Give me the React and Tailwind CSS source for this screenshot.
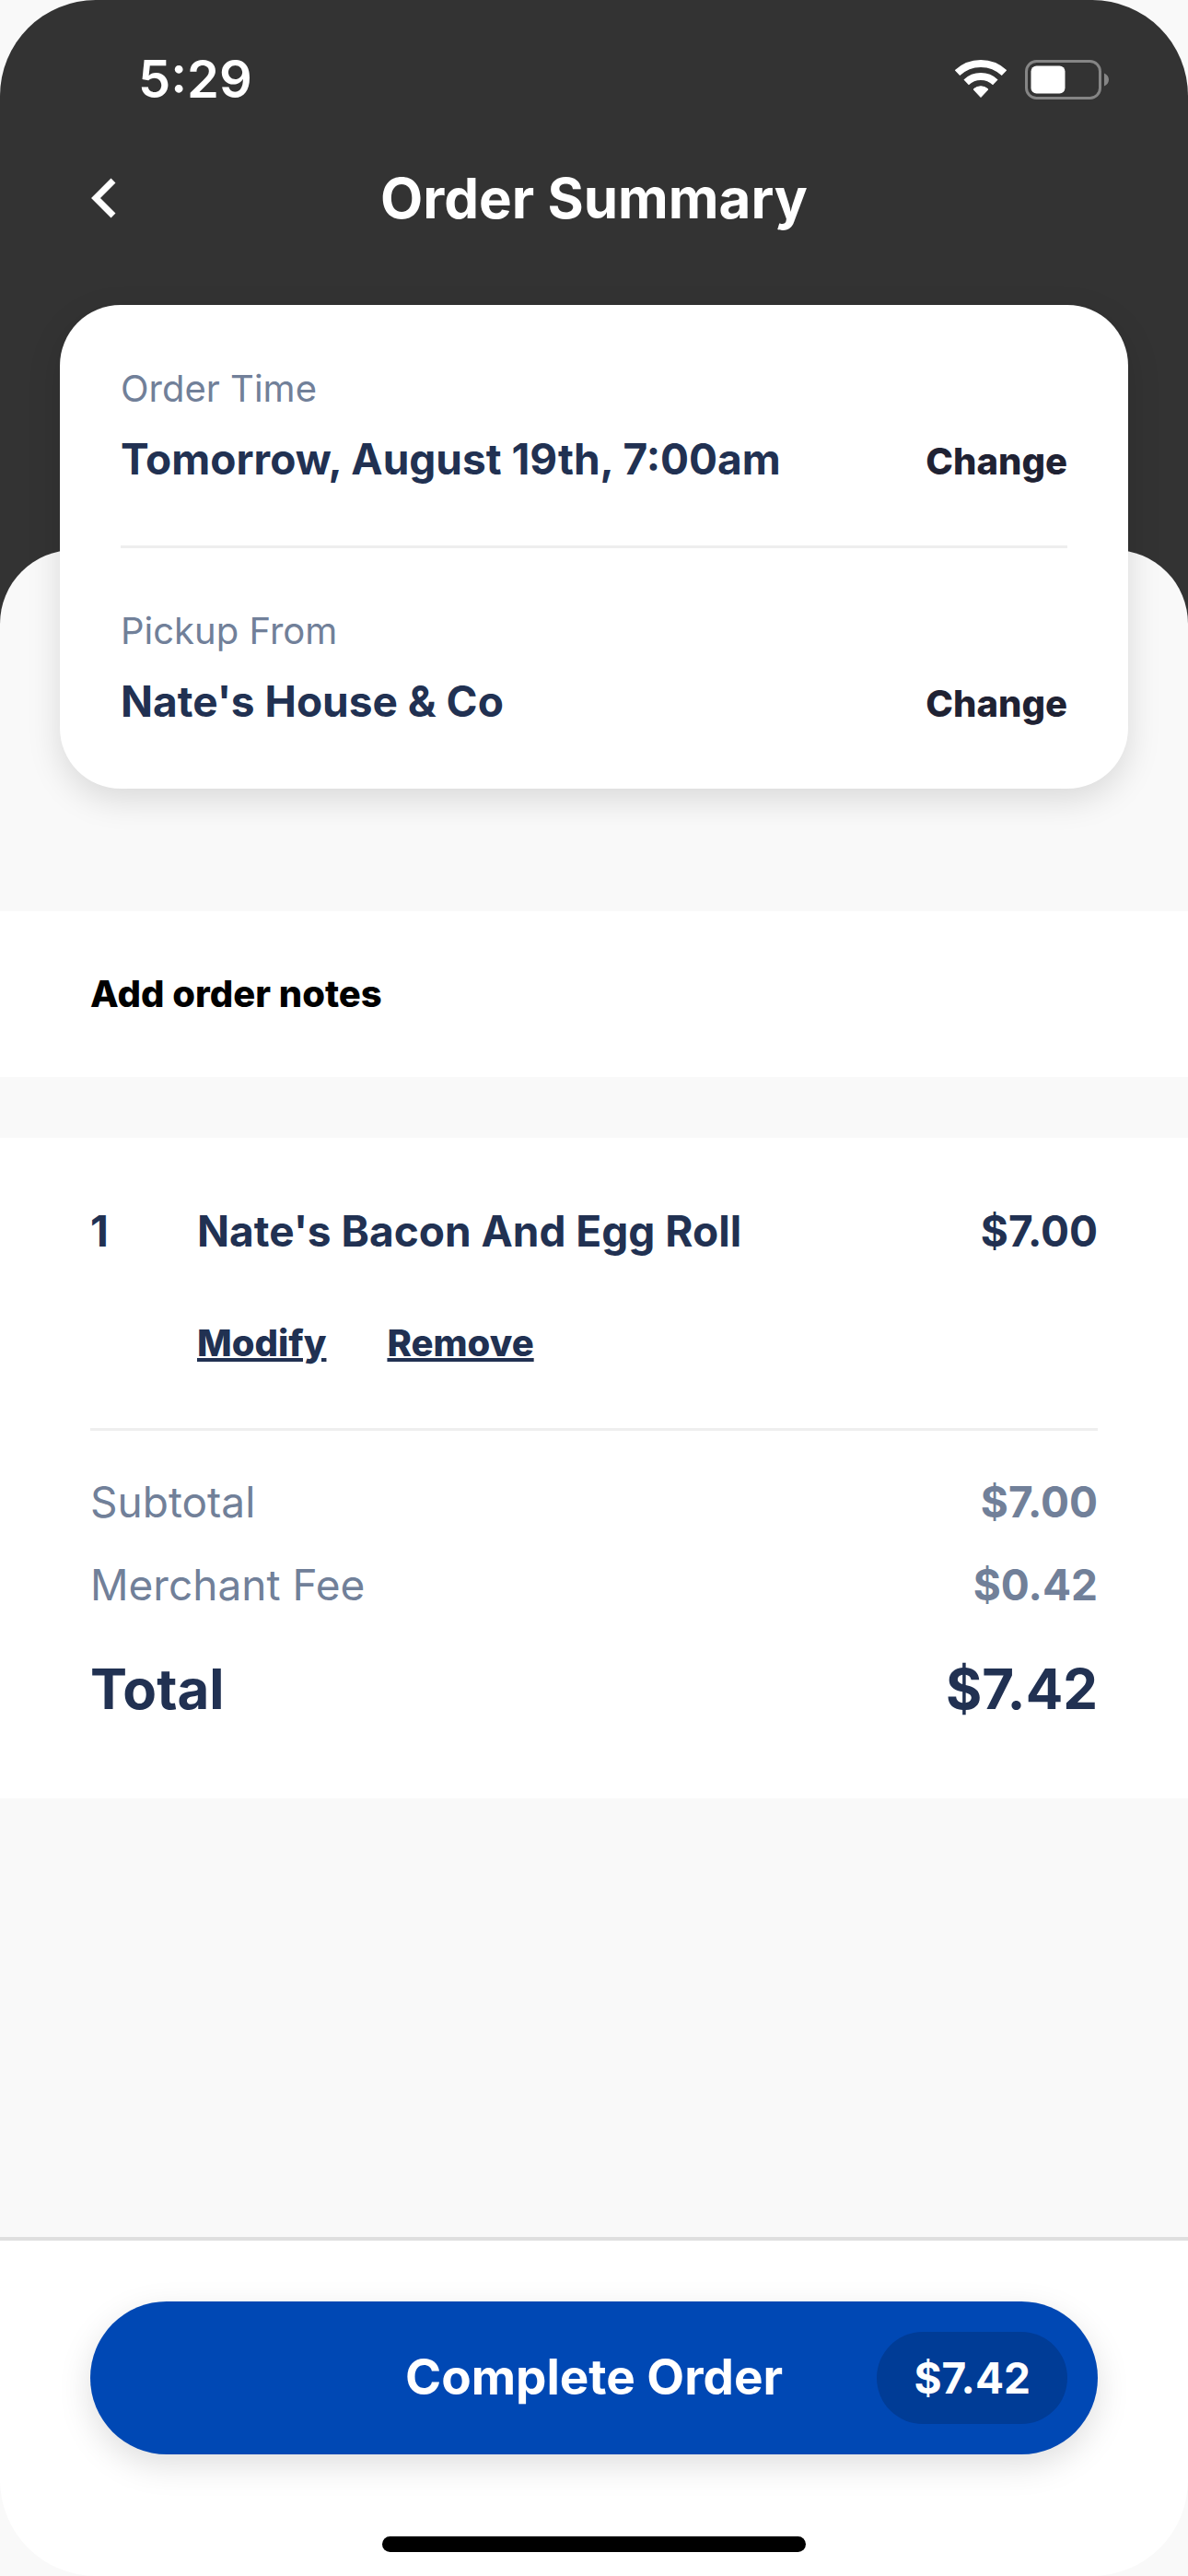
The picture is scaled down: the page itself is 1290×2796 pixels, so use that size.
import { useState } from 'react';

const ORDER = {
    time: 'Tomorrow, August 19th, 7:00am',
    location: "Nate's House & Co",
    items: [{ id: 1, qty: 1, name: "Nate's Bacon And Egg Roll", price: '$7.00' }],
    subtotal: '$7.00',
    fee: '$0.42',
    total: '$7.42',
};

function WifiIcon() {
    return (
        <svg width="56" height="42" viewBox="0 0 56 42" fill="none" stroke="white" aria-hidden="true">
            <path d="M2.500 14.200A37 37 0 0 1 53.500 14.200" strokeWidth="8" />
            <path d="M12.200 24.300A23 23 0 0 1 43.800 24.300" strokeWidth="8" />
            <path d="M28 40.500L20 32a11.500 11.500 0 0 1 16 0z" fill="white" strokeWidth="1" strokeLinejoin="round" />
        </svg>
    );
}

function BatteryIcon() {
    return (
        <svg width="91" height="43" viewBox="0 0 91 43" aria-hidden="true">
            <rect x="1.500" y="1.500" width="80" height="40" rx="11" fill="none" stroke="#858585" strokeWidth="3" />
            <rect x="6.500" y="6.500" width="37" height="30" rx="6" fill="white" />
            <path d="M86 14.500v14c3-1.300 5-4 5-7s-2-5.700-5-7z" fill="#858585" />
        </svg>
    );
}

function DetailRow({ label, value }) {
    return (
        <div>
            <p className="text-[40px] leading-[48px] text-[#718099]">{label}</p>
            <div className="mt-6 flex items-baseline justify-between">
                <p className="text-[46px] leading-[56px] font-bold text-[#213152]">{value}</p>
                <button type="button" className="text-[40px] leading-[48px] font-extrabold text-[#1f2233]">
                    Change
                </button>
            </div>
        </div>
    );
}

export default function App() {
    const [items] = useState(ORDER.items);

    return (
        <div className="bg-[#f9f9f9] font-['Inter',sans-serif]">
            <div className="flex min-h-screen flex-col overflow-hidden rounded-[104px] bg-[#f9f9f9]">
                <header className="h-[700px] bg-[#333333] text-white">
                    <div className="flex h-[172px] items-center justify-between pr-[86px] pl-[150px]">
                        <span className="text-[56px] font-semibold">5:29</span>
                        <div className="flex items-center gap-5">
                            <WifiIcon />
                            <BatteryIcon />
                        </div>
                    </div>
                    <div className="grid h-[86px] grid-cols-[1fr_auto_1fr] items-center px-[98px]">
                        <button type="button" aria-label="Back" className="justify-self-start">
                            <svg width="30" height="46" viewBox="0 0 30 46" fill="none" stroke="white" strokeWidth="7">
                                <path d="M25 4L6 23l19 19" />
                            </svg>
                        </button>
                        <h1 className="text-[60px] leading-[72px] font-bold">Order Summary</h1>
                    </div>
                </header>

                <main className="-mt-[103px] flex-1 rounded-t-[80px] bg-[#f9f9f9]">
                    <section className="relative mx-[65px] -mt-[266px] rounded-[66px] bg-white px-[66px] py-[67px] shadow-[0_12px_36px_rgba(0,0,0,0.13)]">
                        <DetailRow label="Order Time" value={ORDER.time} />
                        <hr className="my-[66px] border-t-3 border-[#eeeeee]" />
                        <DetailRow label="Pickup From" value={ORDER.location} />
                    </section>

                    <section className="mt-[133px] bg-white px-[98px] py-[62px]">
                        <button type="button" className="block text-[40px] leading-[56px] font-extrabold text-black">
                            Add order notes
                        </button>
                    </section>

                    <section className="mt-[66px] bg-white px-[98px] pt-[71px] pb-[83px]">
                        {items.map((item) => (
                            <div key={item.id} className="flex text-[46px] leading-[60px] font-bold text-[#213152]">
                                <span className="w-[116px]">{item.qty}</span>
                                <div className="flex-1">
                                    <p>{item.name}</p>
                                    <div className="mt-16 flex gap-[66px] text-[40px] leading-[56px] font-extrabold">
                                        <button type="button" className="underline">Modify</button>
                                        <button type="button" className="underline">Remove</button>
                                    </div>
                                </div>
                                <span>{item.price}</span>
                            </div>
                        ))}
                        <hr className="mt-16 border-t-3 border-[#eeeeee]" />
                        <dl className="mt-[47px] text-[46px] leading-[60px] text-[#718099]">
                            <div className="flex justify-between">
                                <dt>Subtotal</dt>
                                <dd className="font-bold">{ORDER.subtotal}</dd>
                            </div>
                            <div className="mt-[30px] flex justify-between">
                                <dt>Merchant Fee</dt>
                                <dd className="font-bold">{ORDER.fee}</dd>
                            </div>
                            <div className="mt-[47px] flex justify-between text-[60px] leading-[72px] font-bold text-[#213152]">
                                <dt>Total</dt>
                                <dd>{ORDER.total}</dd>
                            </div>
                        </dl>
                    </section>
                </main>

                <footer className="border-t-4 border-[#dfdfdf] bg-white px-[98px] pt-[66px] pb-[26px]">
                    <button
                        type="button"
                        className="grid h-[166px] w-full grid-cols-[1fr_auto_1fr] items-center rounded-full bg-[#0048b4] px-[33px] text-white shadow-[0_12px_36px_rgba(0,0,0,0.13)]"
                    >
                        <span className="col-start-2 text-[53px] font-bold">Complete Order</span>
                        <span className="justify-self-end rounded-full bg-[#003c96] px-10 py-5 text-[46px] leading-[60px] font-bold">
                            {ORDER.total}
                        </span>
                    </button>
                    <div className="mx-auto mt-[89px] h-[17px] w-[460px] rounded-full bg-black" />
                </footer>
            </div>
        </div>
    );
}
